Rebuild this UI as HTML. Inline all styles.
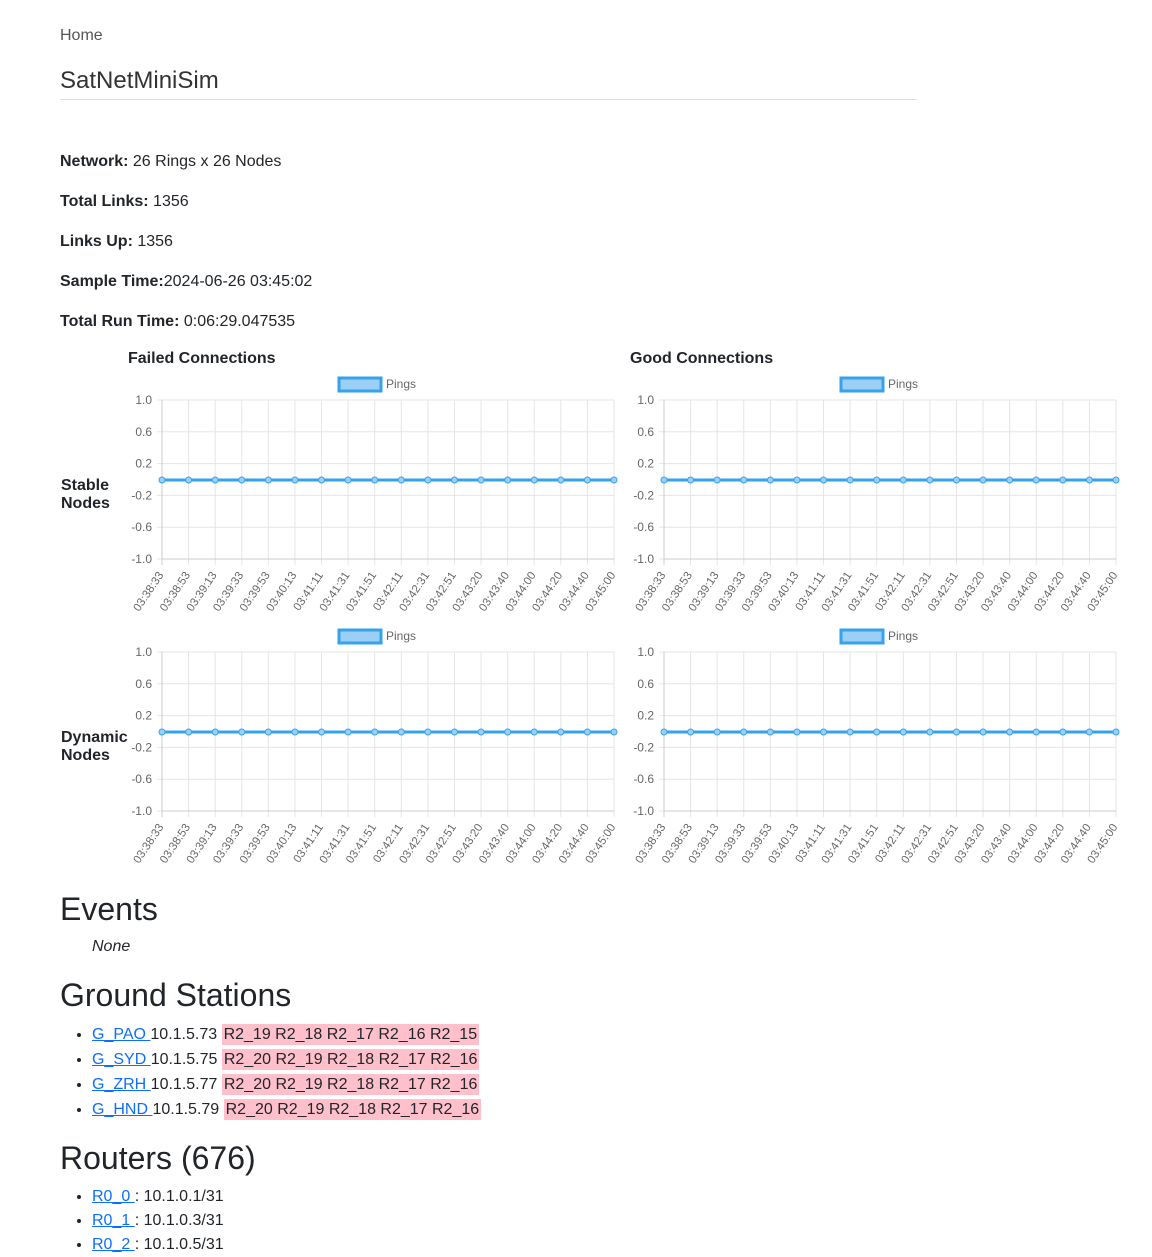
<!DOCTYPE html>
<html><head><meta charset="utf-8">
<style>
body{margin:0;background:#fff;font-family:"Liberation Sans",sans-serif;color:#212529;width:1152px;height:1238px;overflow:hidden;position:relative}
.a{position:absolute;white-space:nowrap}
.p{font-size:16px;left:60px}
b{font-weight:bold}
h2{position:absolute;margin:0;font-weight:normal;font-size:32px;left:60px;line-height:1}
a{color:#0d6efd;text-decoration:underline}
.hl{background:#ffc0cb;padding:2px 2px}
ul{position:absolute;margin:0;padding-left:32px;left:60px;font-size:16px}
li{height:25px;line-height:25px}
svg text{font-family:"Liberation Sans",sans-serif}
</style></head><body>
<div class="a" style="left:60px;top:27px;font-size:16px;color:#555">Home</div>
<div class="a" style="left:60px;top:67px;font-size:24px;color:#333">SatNetMiniSim</div>
<div class="a" style="left:60px;top:99px;width:857px;height:1px;background:#ddd"></div>
<div class="a p" style="top:153px"><b>Network:</b> 26 Rings x 26 Nodes</div>
<div class="a p" style="top:193px"><b>Total Links:</b> 1356</div>
<div class="a p" style="top:233px"><b>Links Up:</b> 1356</div>
<div class="a p" style="top:273px"><b>Sample Time:</b>2024-06-26 03:45:02</div>
<div class="a p" style="top:313px"><b>Total Run Time:</b> 0:06:29.047535</div>
<div class="a" style="left:128px;top:350px;font-size:16px;font-weight:bold">Failed Connections</div>
<div class="a" style="left:630px;top:350px;font-size:16px;font-weight:bold">Good Connections</div>
<div class="a" style="left:61px;top:477px;font-size:16px;font-weight:bold;line-height:18px">Stable<br>Nodes</div>
<div class="a" style="left:61px;top:729px;font-size:16px;font-weight:bold;line-height:18px">Dynamic<br>Nodes</div>
<svg id="s" class="a" style="left:0;top:0" width="1152" height="880"></svg>
<h2 style="top:893px">Events</h2>
<div class="a" style="left:92px;top:938px;font-size:16px;font-style:italic">None</div>
<h2 style="top:979px">Ground Stations</h2>
<ul style="top:1022px">
<li><a>G_PAO </a>10.1.5.73 <span class="hl">R2_19 R2_18 R2_17 R2_16 R2_15</span></li>
<li><a>G_SYD </a>10.1.5.75 <span class="hl">R2_20 R2_19 R2_18 R2_17 R2_16</span></li>
<li><a>G_ZRH </a>10.1.5.77 <span class="hl">R2_20 R2_19 R2_18 R2_17 R2_16</span></li>
<li><a>G_HND </a>10.1.5.79 <span class="hl">R2_20 R2_19 R2_18 R2_17 R2_16</span></li>
</ul>
<h2 style="top:1142px">Routers (676)</h2>
<ul style="top:1184px;line-height:24px">
<li style="height:24px"><a>R0_0 </a>: 10.1.0.1/31</li>
<li style="height:24px"><a>R0_1 </a>: 10.1.0.3/31</li>
<li style="height:24px"><a>R0_2 </a>: 10.1.0.5/31</li>
</ul>
<script>
var t=["03:38:33","03:38:53","03:39:13","03:39:33","03:39:53","03:40:13","03:41:11","03:41:31","03:41:51","03:42:11","03:42:31","03:42:51","03:43:20","03:43:40","03:44:00","03:44:20","03:44:40","03:45:00"];
var h="";
function chart(x0,y0){
 var x1=x0+452,yt=y0,yb=y0+159,dx=452/17;
 h+='<rect x="'+(x0+177)+'" y="'+(y0-22)+'" width="42" height="13" fill="#9ccff5" stroke="#36a2eb" stroke-width="3"/>';
 h+='<text x="'+(x0+224)+'" y="'+(y0-12)+'" font-size="12" fill="#666">Pings</text>';
 var lab=["1.0","0.6","0.2","-0.2","-0.6","-1.0"];
 for(var i=0;i<6;i++){var y=yt+i*159/5;
  h+='<line x1="'+(x0-5)+'" x2="'+x1+'" y1="'+y+'" y2="'+y+'" stroke="#e5e5e5"/>';
  h+='<text x="'+(x0-10)+'" y="'+(y+4)+'" font-size="12" fill="#666" text-anchor="end">'+lab[i]+'</text>';}
 var pts="",c="";
 for(var j=0;j<18;j++){var x=x0+j*dx;
  h+='<line x1="'+x+'" x2="'+x+'" y1="'+yt+'" y2="'+(yb+6)+'" stroke="'+(j==0?'#ccc':'#e5e5e5')+'"/>';
  h+='<text transform="translate('+(x+2)+','+(yb+16)+') rotate(-56)" font-size="11.5" fill="#666" text-anchor="end">'+t[j]+'</text>';
  pts+=x+','+(y0+80)+' ';c+='<circle cx="'+x+'" cy="'+(y0+80)+'" r="3" fill="#9ccff5" stroke="#36a2eb"/>';}
 h+='<line x1="'+x0+'" x2="'+x1+'" y1="'+yb+'" y2="'+yb+'" stroke="#ccc"/>';
 h+='<polyline points="'+pts+'" fill="none" stroke="#36a2eb" stroke-width="3"/>'+c;
}
chart(162,400);chart(664,400);chart(162,652);chart(664,652);
document.getElementById("s").innerHTML=h;
</script>
</body></html>
